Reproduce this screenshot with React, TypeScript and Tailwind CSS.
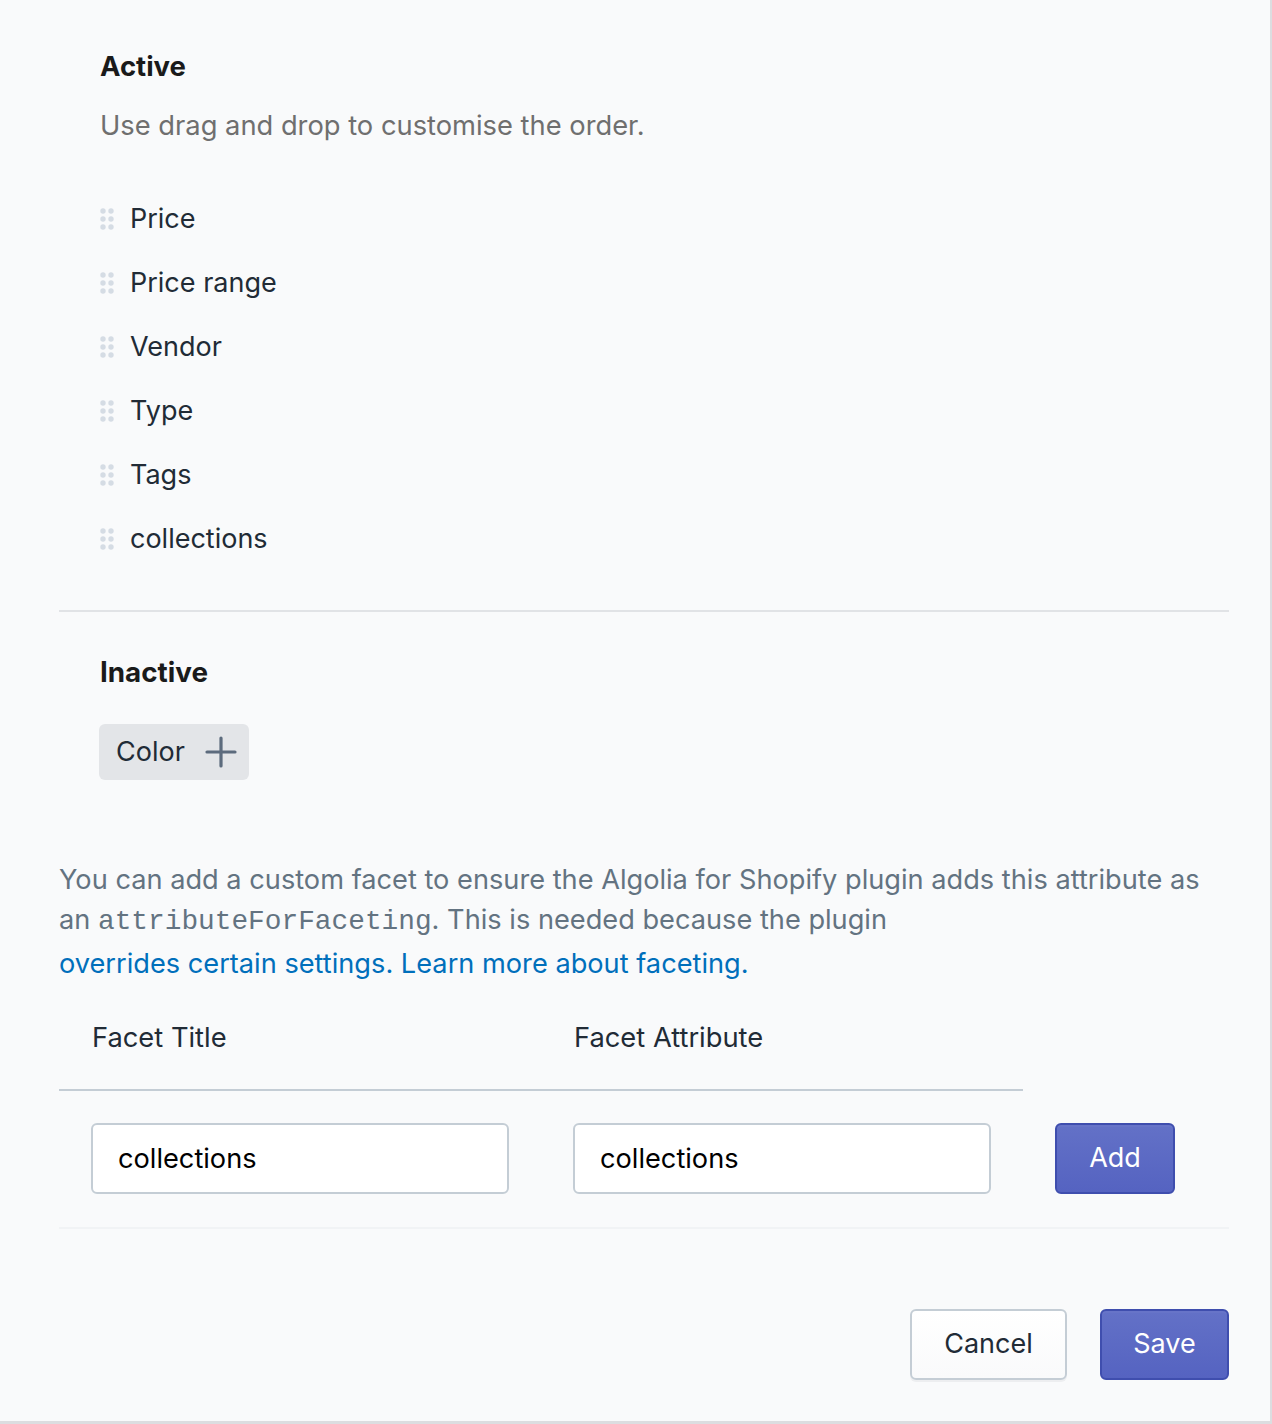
const activeFacets = ["Price", "Price range", "Vendor", "Type", "Tags", "collections"];

const DragHandle = () => (
  <svg width="14" height="22" viewBox="0 0 14 22" className="shrink-0">
    {[3, 11, 19].map((cy) =>
      [3, 11].map((cx) => <circle key={`${cx}-${cy}`} cx={cx} cy={cy} r="2.7" fill="#d5dce4" />)
    )}
  </svg>
);

const PlusIcon = () => (
  <svg width="32" height="32" viewBox="0 0 32 32" className="shrink-0">
    <path d="M16 2v28M2 16h28" stroke="#5c6b7d" strokeWidth="3.2" strokeLinecap="round" />
  </svg>
);

export default function App() {
  return (
    <div
      className="w-[1272px] min-h-[1424px] bg-white"
      style={{ fontFamily: "Inter, 'Noto Sans', sans-serif" }}
    >
      <div className="w-[1272px] h-[1424px] bg-[#f9fafb] border-r-[2px] border-b-[3px] border-[#dcdde0] flex flex-col">
        <div className="ml-[59px] w-[1170px] flex flex-col">
          {/* Active */}
          <div className="pl-[41px] pt-[50px] flex flex-col">
            <h2 className="text-[27.5px] leading-[32px] font-bold text-[#1a1a1a]">Active</h2>
            <p className="mt-[28px] text-[27.3px] leading-[32px] text-[#6f6f6f]">
              Use drag and drop to customise the order.
            </p>
            <ul className="mt-[45px] flex flex-col">
              {activeFacets.map((f) => (
                <li key={f} className="h-[64px] flex items-center gap-[16px] text-[27px] text-[#212b36]">
                  <DragHandle />
                  <span>{f}</span>
                </li>
              ))}
            </ul>
          </div>

          <div className="mt-[39px] h-[2px] bg-[#e1e3e6]" />

          {/* Inactive */}
          <div className="pl-[41px] flex flex-col">
            <h2 className="mt-[44px] text-[27.8px] leading-[32px] font-bold text-[#1a1a1a]">Inactive</h2>
            <div className="mt-[36px] -ml-[1px] flex">
              <button className="h-[56px] w-[150px] rounded-[6px] bg-[#e3e5e8] flex items-center pl-[17px] gap-[20px] text-[27px] text-[#212b36]">
                <span>Color</span>
                <PlusIcon />
              </button>
            </div>
          </div>

          {/* Custom facet */}
          <div className="mt-[80px] text-[27.2px] leading-[40px] text-[#637381]">
            <span>You can add a custom facet to ensure the Algolia for Shopify plugin adds this attribute as an </span>
            <code className="text-[27.8px]" style={{ fontFamily: "'Liberation Mono', monospace" }}>
              attributeForFaceting
            </code>
            <span>. This is needed because the plugin</span>
            <a href="#" className="block mt-[2px] text-[#006fbb]">
              overrides certain settings. Learn more about faceting.
            </a>
          </div>

          <div className="mt-[22px] w-[964px] border-b-[2px] border-[#c4cdd5] flex pt-[16px] pb-[35px] text-[27.3px] leading-[32px] text-[#212b36]">
            <div className="w-[482px] pl-[33px]">Facet Title</div>
            <div className="w-[482px] pl-[33px]">Facet Attribute</div>
          </div>

          <div className="border-b-[2px] border-[#f1f3f5] flex items-center pt-[32px] pb-[33px]">
            <div className="w-[482px] pl-[32px]">
              <input
                readOnly
                value="collections"
                className="w-[418px] h-[71px] bg-white border-[2px] border-[#c4cdd5] rounded-[6px] px-[25px] text-[27.2px] text-black outline-none"
              />
            </div>
            <div className="w-[482px] pl-[32px]">
              <input
                readOnly
                value="collections"
                className="w-[418px] h-[71px] bg-white border-[2px] border-[#c4cdd5] rounded-[6px] px-[25px] text-[27.2px] text-black outline-none"
              />
            </div>
            <div className="pl-[32px]">
              <button className="w-[120px] h-[71px] rounded-[6px] border-[2px] border-[#3f4eae] bg-linear-to-b from-[#6371c7] to-[#5563c1] text-white text-[27px] shadow-[inset_0_2px_0_0_#6774c8]">
                Add
              </button>
            </div>
          </div>

          {/* Footer */}
          <div className="mt-[80px] flex justify-end gap-[33px]">
            <button className="w-[157px] h-[71px] rounded-[6px] border-[2px] border-[#c4cdd5] bg-linear-to-b from-white to-[#f9fafb] text-[27px] text-[#212b36] shadow-[0_2px_0_0_rgba(22,29,37,0.05)]">
              Cancel
            </button>
            <button className="w-[129px] h-[71px] rounded-[6px] border-[2px] border-[#3f4eae] bg-linear-to-b from-[#6371c7] to-[#5563c1] text-white text-[27px] shadow-[inset_0_2px_0_0_#6774c8]">
              Save
            </button>
          </div>
        </div>
      </div>
    </div>
  );
}
